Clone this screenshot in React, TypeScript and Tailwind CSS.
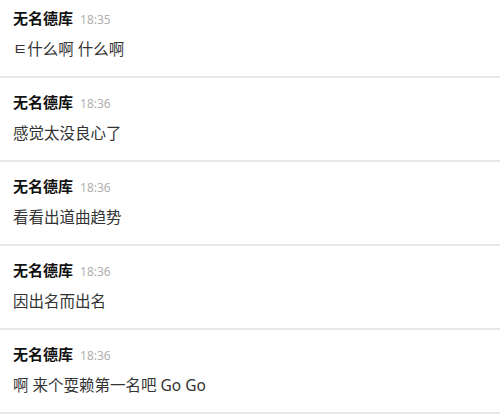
import React from "react";

interface Msg {
  name: string;
  time: string;
  text: string;
}

const messages: Msg[] = [
  { name: "无名德库", time: "18:35", text: "ㅌ什么啊 什么啊" },
  { name: "无名德库", time: "18:36", text: "感觉太没良心了" },
  { name: "无名德库", time: "18:36", text: "看看出道曲趋势" },
  { name: "无名德库", time: "18:36", text: "因出名而出名" },
  { name: "无名德库", time: "18:36", text: "啊 来个耍赖第一名吧 Go Go" },
];

const MessageRow: React.FC<{ msg: Msg }> = ({ msg }) => {
  return (
    <div className="px-[13px] pt-[14px] pb-4 border-b-2 border-[#e8e8e8]">
      <div className="flex items-baseline gap-[7px] h-5 leading-5">
        <span className="text-[15px] font-bold text-[#111]">{msg.name}</span>
        <span className="text-[12px] text-[#b0b0b0]">{msg.time}</span>
      </div>
      <div className="mt-[10px] h-[22px] leading-[22px] text-[15.5px] text-[#333]">{msg.text}</div>
    </div>
  );
};

export default function App() {
  return (
    <div
      className="w-[500px] h-[417px] overflow-hidden bg-white"
      style={{ fontFamily: '"Noto Sans", "Noto Sans CJK SC", sans-serif' }}
    >
      <div className="-mt-1.5">
        {messages.map((m, i) => (
          <MessageRow key={i} msg={m} />
        ))}
      </div>
    </div>
  );
}
